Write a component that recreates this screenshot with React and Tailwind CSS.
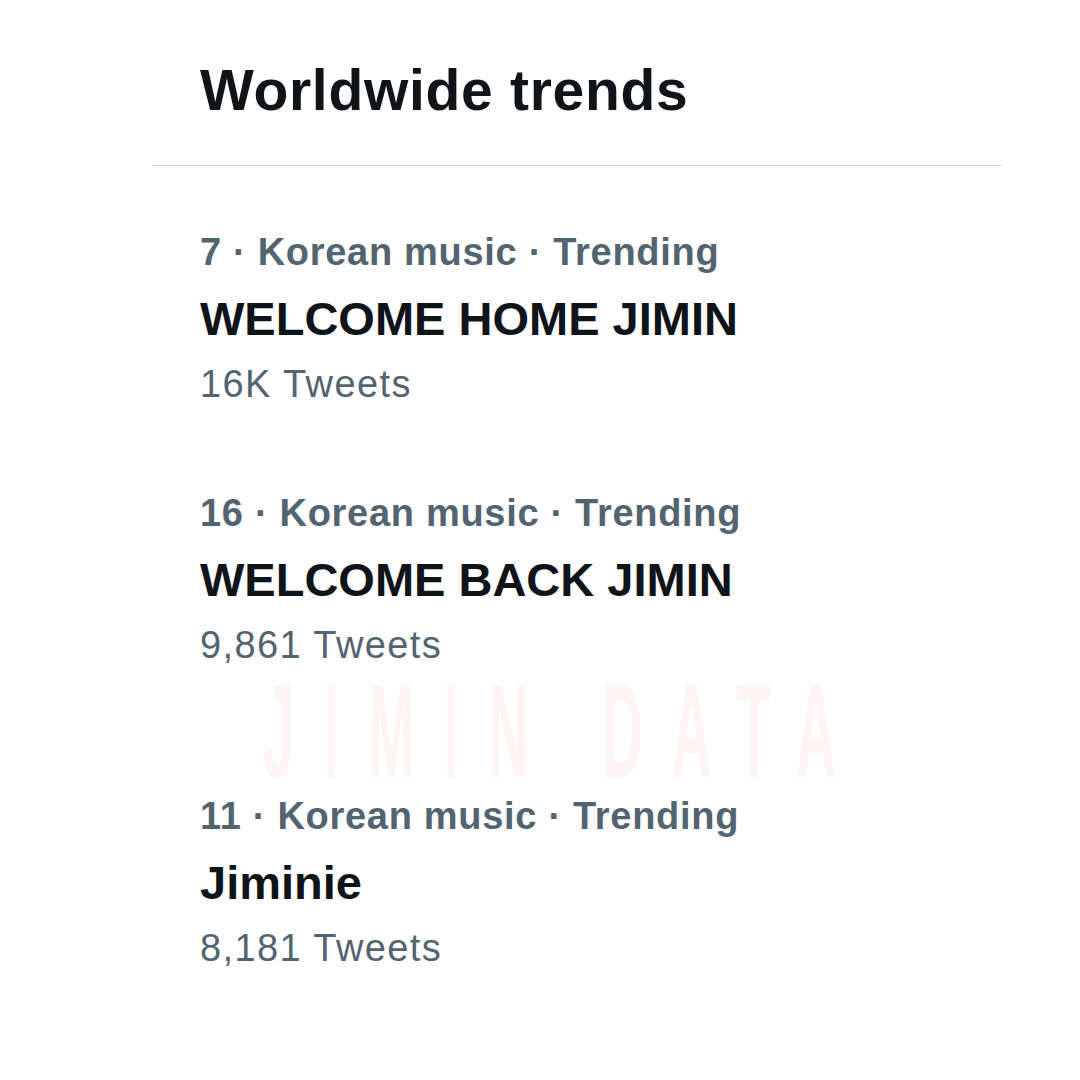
import React from 'react'

const trends = [
  { rank: 7, name: 'WELCOME HOME JIMIN', count: '16K Tweets', mt: 'mt-[64px]' },
  { rank: 16, name: 'WELCOME BACK JIMIN', count: '9,861 Tweets', mt: 'mt-[85px]' },
  { rank: 11, name: 'Jiminie', count: '8,181 Tweets', mt: 'mt-[127px]' },
]

const TrendRow = ({ rank, name, count, mt }) => (
  <div className={`${mt} pl-[48px] flex flex-col`}>
    {/* META */}
    <p className="text-[38px] leading-[44px] font-bold tracking-[0.7px] text-[#536471] whitespace-nowrap">
      {rank} · Korean music · Trending
    </p>
    {/* NAME */}
    <p className="mt-[17px] text-[47px] leading-[56px] font-bold text-[#0f1419] whitespace-nowrap">
      {name}
    </p>
    {/* COUNT */}
    <p className="mt-[15px] text-[38px] leading-[44px] tracking-[1.4px] text-[#536471] whitespace-nowrap">
      {count}
    </p>
  </div>
)

const App = () => {
  return (
    <div className="relative w-[1080px] h-[1080px] bg-white overflow-hidden font-['Liberation_Sans',Arial,sans-serif]">

      {/* WATERMARK */}
      <div className="absolute left-[263px] top-[685px] text-[56px] leading-[40px] font-bold tracking-[29px] text-[#fef4f2] origin-top scale-y-[2.37] whitespace-nowrap select-none">
        JIMIN DATA
      </div>

      <div className="relative ml-[152px] w-[850px] flex flex-col">
        {/* TITLE */}
        <h1 className="mt-[56px] pl-[48px] text-[57px] leading-[68px] font-bold tracking-[0.7px] text-[#0f1419]">
          Worldwide trends
        </h1>

        <div className="mt-[41px] h-px bg-[#dcdcdc]" />

        {trends.map((t) => (
          <TrendRow key={t.rank} {...t} />
        ))}
      </div>
    </div>
  )
}

export default App
